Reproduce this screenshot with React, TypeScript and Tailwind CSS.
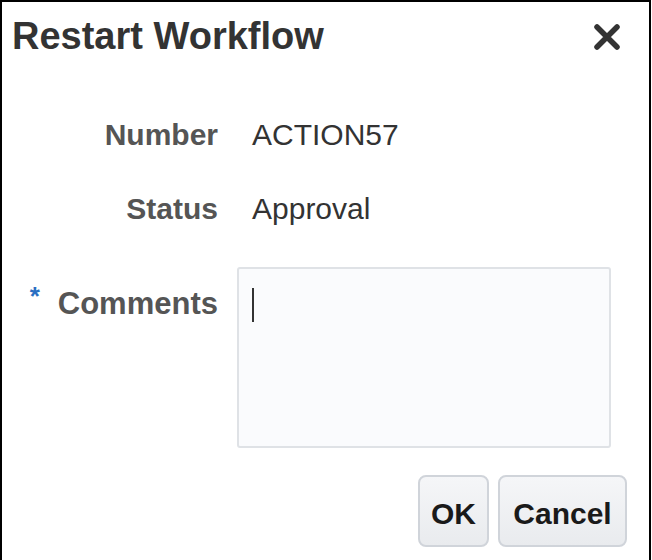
export default function App() {
  return (
    <div
      className="w-[652px] h-[560px] bg-white overflow-hidden"
      style={{ fontFamily: '"Liberation Sans", Arial, sans-serif' }}
    >
      <div className="w-[651px] h-[560px] border-2 border-b-0 border-black flex flex-col">
        {/* header */}
        <div className="flex items-center justify-between pl-[10px] pr-[28px] pt-[12px] h-[56px]">
          <h1 className="text-[38px] leading-[40px] font-bold text-[#333]">Restart Workflow</h1>
          <svg width="28" height="28" viewBox="0 0 28 28" className="mt-[1px]">
            <path d="M4 4 L24 24 M24 4 L4 24" stroke="#333" strokeWidth="5.5" strokeLinecap="round" />
          </svg>
        </div>

        {/* form */}
        <div className="grid grid-cols-[216px_1fr] gap-x-[19px] mt-[59px]">
          <div className="text-right text-[30px] leading-[36px] font-bold text-[#555]">Number</div>
          <div className="pl-[15px] text-[30px] leading-[36px] text-[#333]">ACTION57</div>

          <div className="mt-[38px] text-right text-[30px] leading-[36px] font-bold text-[#555]">Status</div>
          <div className="mt-[38px] pl-[15px] text-[30px] leading-[36px] text-[#333]">Approval</div>

          <div className="mt-[40px] pt-[19px] flex justify-end items-start text-[31px] leading-[36px] font-bold text-[#555]">
            <span className="text-[#2a6fc2] text-[26px] leading-[20px] mr-[18px]">*</span>
            <span>Comments</span>
          </div>
          <div className="mt-[40px]">
            <div className="w-[374px] h-[181px] rounded-[3px] border-2 border-[#dfe2e6] bg-[#fafbfd] pl-[13px] pt-[19px]">
              <div className="w-[2px] h-[34px] bg-[#333]" />
            </div>
          </div>
        </div>

        {/* buttons */}
        <div className="flex justify-end gap-[9px] pr-[22px] mt-[27px]">
          <button className="w-[71px] h-[72px] pt-[4px] rounded-[8px] border-2 border-[#d0d4da] bg-gradient-to-b from-[#f5f6f8] to-[#e9ebee] text-[30px] font-bold text-[#1a1a1a]">
            OK
          </button>
          <button className="w-[129px] h-[72px] pt-[4px] rounded-[8px] border-2 border-[#d0d4da] bg-gradient-to-b from-[#f5f6f8] to-[#e9ebee] text-[30px] font-bold text-[#1a1a1a]">
            Cancel
          </button>
        </div>
      </div>
    </div>
  );
}
